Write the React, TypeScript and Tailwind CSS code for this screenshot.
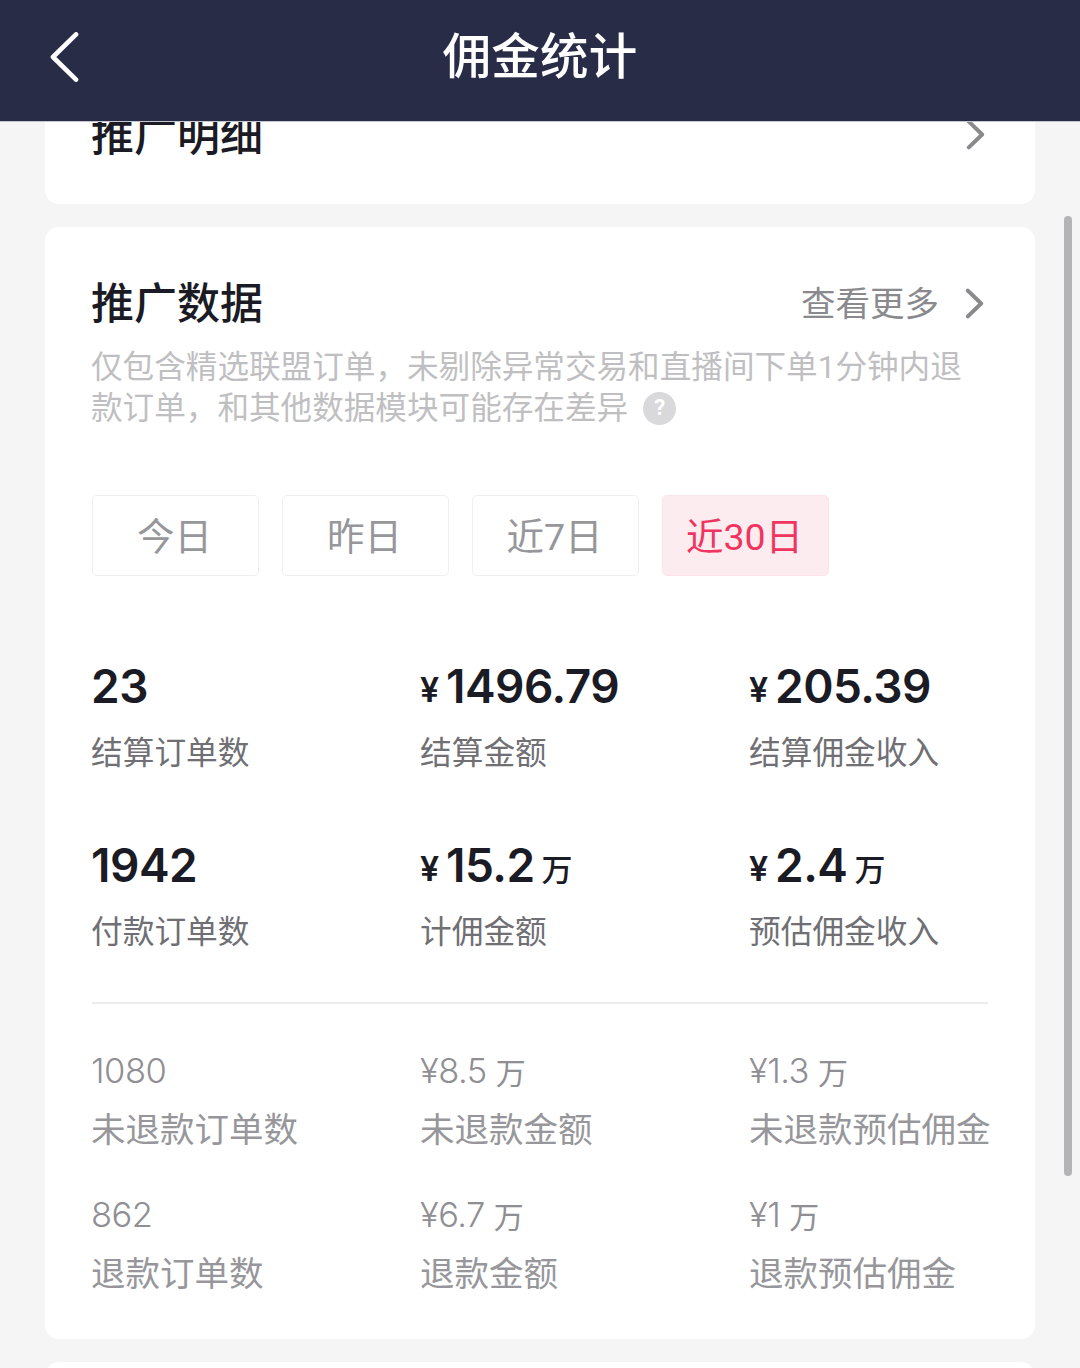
import React from "react";

const CJK = "font-['Roboto','Noto_Sans_CJK_SC',sans-serif]";

function Chevron({ className }: { className?: string }) {
  return (
    <svg viewBox="0 0 20 32" className={className} fill="none" stroke="#8a8a8e" strokeWidth="4.2" strokeLinecap="round" strokeLinejoin="round">
      <path d="M3 2.5 L17 16 L3 29.5" />
    </svg>
  );
}

function Tab({ label, active }: { label: string; active?: boolean }) {
  return (
    <div
      className={
        "flex h-[81px] w-[167px] items-center justify-center rounded-[5px] border pt-[4px] pr-[2px] text-[37.5px] " +
        (active ? "border-[#fde4e9] bg-[#fdecef] text-[#f0345f]" : "border-[#efefef] bg-white text-[#97979b]")
      }
    >
      {label}
    </div>
  );
}

function Primary({ value, unit, label, yen }: { value: string; unit?: string; label: string; yen?: boolean }) {
  return (
    <div className="flex flex-col">
      <div className="flex h-[60px] items-end font-['Inter',sans-serif] leading-[60px] text-[#1a1b24]">
        {yen && <span className="mr-[6px] w-[20px] text-[34px] font-semibold leading-[52px]">¥</span>}
        <span className="text-[46px] font-semibold tracking-[-0.5px]">{value}</span>
        {unit && <span className="ml-[7px] font-['Noto_Sans_CJK_SC',sans-serif] text-[31px] font-medium leading-[54px]">{unit}</span>}
      </div>
      <div className="mt-[13px] text-[31.7px] leading-[50px] text-[#6f6f74]">{label}</div>
    </div>
  );
}

function Secondary({ value, unit, label }: { value: string; unit?: string; label: string }) {
  return (
    <div className="flex flex-col">
      <div className="flex h-[48px] items-end font-['Inter',sans-serif] text-[34.5px] font-light leading-[48px] tracking-[-0.5px] text-[#8f8f93]">
        <span>{value}</span>
        {unit && <span className="ml-[9px] font-['Noto_Sans_CJK_SC',sans-serif] text-[30px] font-normal leading-[48px] tracking-normal">{unit}</span>}
      </div>
      <div className="mt-[10px] whitespace-nowrap text-[34.5px] leading-[50px] text-[#97979b]">{label}</div>
    </div>
  );
}

export default function App() {
  return (
    <div className={"relative h-[1368px] w-[1080px] overflow-hidden bg-[#f5f5f5] " + CJK}>
      <header className="relative z-10 flex h-[121px] items-center justify-center bg-[#282c47] pb-[4px] shadow-[0_1px_0_#c4c5cf]">
        <svg viewBox="0 0 30 52" className="absolute left-[50px] top-[32px] h-[50px] w-[29px]" fill="none" stroke="#ffffff" strokeWidth="4.8" strokeLinecap="round" strokeLinejoin="round">
          <path d="M27 2.5 L3 26 L27 49.5" />
        </svg>
        <h1 className="text-[48.5px] font-medium leading-none tracking-[0.2px] text-white">佣金统计</h1>
      </header>

      <section className="mx-[45px] flex h-[83px] items-start justify-between overflow-hidden rounded-b-[14px] bg-white pl-[46px] pr-[50px]">
        <div className="-mt-[13px] text-[43px] font-medium leading-[56px] text-[#1a1b24]">推广明细</div>
        <Chevron className="-mt-[2px] h-[31px] w-[19px]" />
      </section>

      <section className="mx-[45px] mt-[23px] h-[1112px] rounded-[14px] bg-white pl-[46px] pr-[47px] pt-[49px]">
        <div className="flex h-[56px] items-center justify-between pr-[4px]">
          <h2 className="text-[43px] font-medium leading-[56px] text-[#1a1b24]">推广数据</h2>
          <div className="flex items-center text-[34.5px] text-[#8a8a8e]">
            <span className="pt-[1px]">查看更多</span>
            <Chevron className="ml-[26px] h-[31px] w-[19px] -translate-y-[1px]" />
          </div>
        </div>
        <p className="mt-[15px] w-[880px] text-[31.6px] leading-[41px] text-[#bfbfc2]">
          仅包含精选联盟订单，未剔除异常交易和直播间下单1分钟内退款订单，和其他数据模块可能存在差异
          <span className="ml-[15px] inline-flex h-[33px] w-[33px] items-center justify-center rounded-full bg-[#d9d9dc] align-[4px] text-[22px] font-bold leading-none text-white">?</span>
        </p>

        <div className="ml-[1px] mt-[66px] flex gap-[23px]">
          <Tab label="今日" />
          <Tab label="昨日" />
          <Tab label="近7日" />
          <Tab label="近30日" active />
        </div>

        <div className="mt-[80px] grid grid-cols-[329px_329px_1fr] gap-y-[56px]">
          <Primary value="23" label="结算订单数" />
          <Primary yen value="1496.79" label="结算金额" />
          <Primary yen value="205.39" label="结算佣金收入" />
          <Primary value="1942" label="付款订单数" />
          <Primary yen value="15.2" unit="万" label="计佣金额" />
          <Primary yen value="2.4" unit="万" label="预估佣金收入" />
        </div>

        <div className="ml-[1px] mt-[44px] h-[2px] w-[896px] bg-[#ececee]" />

        <div className="mt-[43px] grid grid-cols-[329px_329px_1fr] gap-y-[36px]">
          <Secondary value="1080" label="未退款订单数" />
          <Secondary value="¥8.5" unit="万" label="未退款金额" />
          <Secondary value="¥1.3" unit="万" label="未退款预估佣金" />
          <Secondary value="862" label="退款订单数" />
          <Secondary value="¥6.7" unit="万" label="退款金额" />
          <Secondary value="¥1" unit="万" label="退款预估佣金" />
        </div>
      </section>

      <section className="mx-[45px] mt-[23px] h-[40px] rounded-t-[14px] bg-white" />

      <div className="absolute left-[1064px] top-[216px] h-[960px] w-[8px] rounded-full bg-[#b4b4b6]" />
    </div>
  );
}
